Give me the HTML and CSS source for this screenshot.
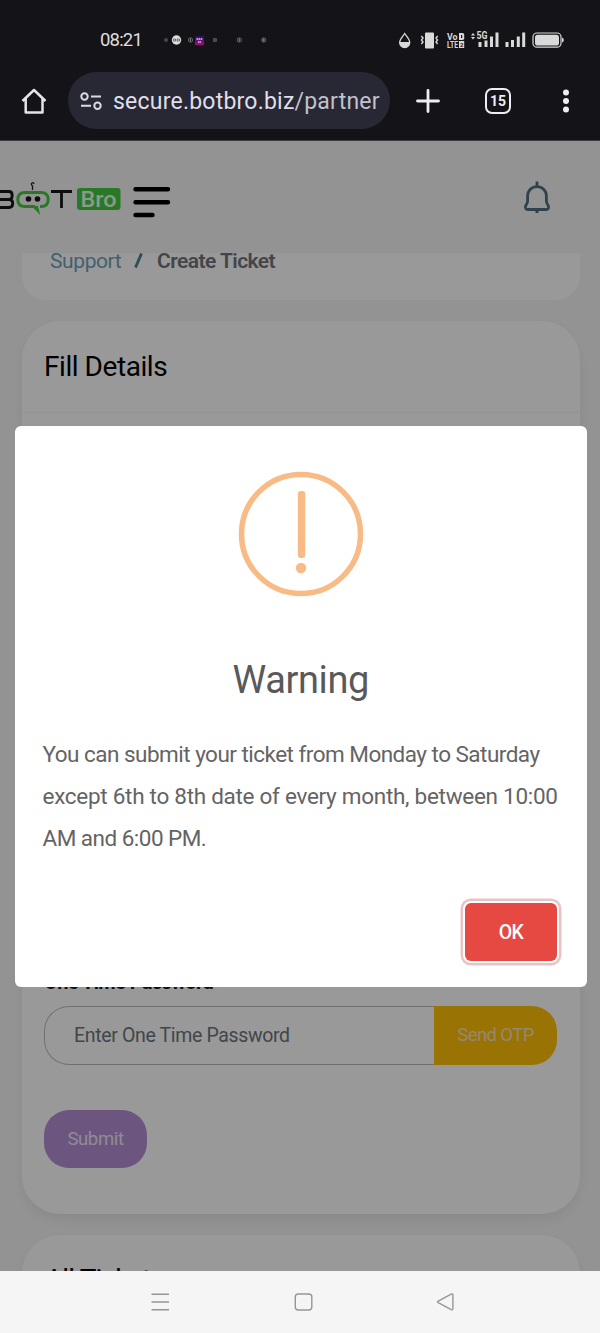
FILE: index.html
```html
<!DOCTYPE html>
<html lang="en">
<head>
<meta charset="utf-8">
<title>Create Ticket</title>
<link rel="stylesheet" href="styles.css">
</head>
<body>
<div class="phone">
  <header class="chrome">
    <div class="status">
      <span class="clock">08:21</span>
      <svg class="notes" width="106" height="14" viewBox="0 0 106 14">
        <circle cx="3" cy="7" r="2" fill="#48474b"/><circle cx="13.500" cy="7" r="4.700" fill="#dcdcdc"/><path d="M10.500 6h2v2h-2zM14 6h2.500v2H14z" fill="none" stroke="#555" stroke-width=".8"/>
        <circle cx="27.500" cy="7" r="2.200" fill="none" stroke="#77767a" stroke-width=".8"/><path d="M27.500 5.500v3" stroke="#aaa" stroke-width=".8"/>
        <defs><linearGradient id="app" x2="0" y2="1"><stop stop-color="#25106c"/><stop offset="1" stop-color="#a21172"/></linearGradient></defs>
        <path d="M32 3h9v9h-9z" fill="url(#app)"/><path d="M33.500 6h6M35 9h3" stroke="#e7c7ef" stroke-width="1.600" stroke-dasharray="1.600 .5"/>
        <circle cx="52" cy="7" r="2.300" fill="#4b4a4e"/><circle cx="76.300" cy="7" r="2.100" fill="none" stroke="#77767a" stroke-width=".8"/><path d="M76.300 5.500v3" stroke="#aaa" stroke-width=".8"/>
        <circle cx="100.700" cy="7" r="2.100" fill="#333" stroke="#77767a" stroke-width=".8"/><path d="M100.700 5.500v3" stroke="#999" stroke-width=".8"/>
      </svg>
      <svg class="system" width="168" height="24" viewBox="397 28 168 24">
        <g fill="#d9d9d9">
          <path d="M404.700 33.500c-2 3-5 5.600-5 9a5 5 0 0 0 10 0c0-3.400-3-6-5-9z" fill="none" stroke="#d9d9d9" stroke-width="1.300"/><path d="M399.500 42h10.400a5.200 5.800 0 0 1-10.400 0z"/>
          <rect x="425" y="32.500" width="9" height="16" rx="1"/><path d="M421.300 36l1.700 2-1.500 2 1.500 2-1.700 2M437.700 36l-1.700 2 1.500 2-1.500 2 1.700 2" fill="none" stroke="#d9d9d9" stroke-width="1.400"/>
          <text x="447" y="39.500" class="tiny" textLength="10.500" lengthAdjust="spacingAndGlyphs">Vo</text><text x="447" y="47.700" class="tiny" textLength="11" lengthAdjust="spacingAndGlyphs">LTE</text>
          <path d="M459 33h3.500q1.700 0 1.700 1.700v3.600q0 1.700-1.700 1.700H459z"/><path d="M461 35v3h1.200v-3z" fill="#141318"/>
          <rect x="459" y="41" width="5.200" height="7"/><text x="460" y="47" font-size="6" font-family="Roboto" font-weight="700" fill="#141318">2</text>
          <path d="M471 35.500l2-2.500 2 2.500zM471 37l2 2.500 2-2.500z"/><text x="476.500" y="39" class="five" textLength="11" lengthAdjust="spacingAndGlyphs">5G</text>
          <path d="M478.500 42h3v5h-3zM484.500 40.500h3v6.500h-3zM490 36.500h3V47h-3zM495.500 32.500h3V47h-3zM505.500 42h3v5h-3zM511 40h3v7h-3zM516.800 36.500h3V47h-3zM522.200 32.500h3V47h-3z"/>
          <rect x="533" y="33" width="28" height="14.200" rx="4" fill="none" stroke="#d9d9d9" stroke-width="1.200"/><rect x="535" y="34.700" width="24" height="10.800" rx="2.600"/><path d="M562 37.500q1.800.5 1.800 2.500t-1.800 2.500z"/>
        </g>
      </svg>
    </div>
    <div class="toolbar">
      <svg class="home" width="28" height="28" viewBox="0 0 28 28"><path d="M2.500 14L14 3l11.500 11M5.700 11.500v14h16.800v-14" fill="none" stroke="#e5e4e9" stroke-width="2.500" stroke-linejoin="round"/></svg>
      <div class="url">
        <svg width="22" height="20" viewBox="0 0 22 20"><g fill="none" stroke="#dad9e2" stroke-width="2"><circle cx="4.500" cy="5.500" r="3.200"/><path d="M11 5.500h10M1 14.800h10"/><circle cx="17.500" cy="14.800" r="3.200"/></g></svg>
        <span class="address">secure.botbro.biz<span class="path">/partner</span></span>
      </div>
      <svg class="plus" width="24" height="24" viewBox="0 0 24 24"><path d="M1.500 12h21M12 1.500v21" stroke="#eeedf2" stroke-width="2.800" stroke-linecap="round"/></svg>
      <span class="tabs">15</span>
      <svg class="dots" width="8" height="26" viewBox="0 0 8 26" fill="#eeedf2"><circle cx="4" cy="4.500" r="3"/><circle cx="4" cy="13" r="3"/><circle cx="4" cy="21.500" r="3"/></svg>
    </div>
  </header>

  <main class="page">
    <div class="topbar">
      <svg width="172" height="44" viewBox="0 178 172 44">
        <g fill="none" stroke="#161616" stroke-width="2.800"><path d="M-7 191.500H9q3.200 0 3.200 4t-3.200 4H-7M9 199.500q3.700 0 3.700 4t-3.700 4H-7M51 191.500h21M61.500 191.500V208"/></g>
        <path d="M32.500 190v-4q-2-2-.5-3t2 1" fill="none" stroke="#222" stroke-width="1.300"/>
        <path d="M29 206.500h-4q-7.200 0-7.200-7t7.200-7h16q7.200 0 7.200 7t-7.200 7h-1M27 206.500h7l3.500 3.500-1-4" fill="none" stroke="#45c93f" stroke-width="3"/>
        <circle cx="28.500" cy="199" r="2.800" fill="#161616"/><circle cx="37.500" cy="199" r="2.800" fill="#161616"/>
        <rect x="77" y="188" width="43.500" height="22" rx="3" fill="#45c93f"/>
        <text x="80.500" y="207" class="bro" textLength="36" lengthAdjust="spacingAndGlyphs">Bro</text>
        <path d="M135.500 189.300h32.500M135.500 202.200h32.500M135.500 215h17" stroke="#000" stroke-width="4.400" stroke-linecap="round"/>
      </svg>
      <svg class="bell" width="30" height="34" viewBox="0 0 30 34"><path d="M15 1.500v5M5.600 16a9.400 9.400 0 0 1 18.800 0v5q0 2 1.400 3.800c1.600 2 .8 4.700-1.300 4.700h-19c-2.100 0-2.900-2.700-1.300-4.700Q5.600 23 5.600 21zM13.500 31.600h3" fill="none" stroke="#4f6f83" stroke-width="2.800"/></svg>
    </div>
    <nav class="crumbs"><span class="link">Support</span><svg class="slash" width="9" height="15" viewBox="0 0 9 15" role="img" aria-label="/"><path d="M1.500 14.500L7.500 .5" stroke="#52809a" stroke-width="2.900"/></svg><b class="here">Create Ticket</b></nav>
    <section class="card form">
      <h2>Fill Details</h2>
      <div class="fields">
        <label>One Time Password</label>
        <div class="otp"><span class="input">Enter One Time Password</span><span class="send">Send OTP</span></div>
        <span class="submit">Submit</span>
      </div>
    </section>
    <section class="card list"><h2>All Tickets</h2></section>

    <div class="overlay">
      <div class="modal">
        <svg width="126" height="126" viewBox="0 0 126 126"><circle cx="63" cy="63" r="59.500" fill="none" stroke="#f8bb86" stroke-width="5.500"/><rect x="59.800" y="20" width="7.500" height="67" rx="3" fill="#f8bb86"/><circle cx="63" cy="97" r="5.200" fill="#f8bb86"/></svg>
        <h1>Warning</h1>
        <p><span class="l1">You can submit your ticket from Monday to Saturday</span><br><span class="l2">except 6th to 8th date of every month, between 10:00</span><br><span class="l3">AM and 6:00 PM.</span></p>
        <span class="ok">OK</span>
      </div>
    </div>
  </main>

  <footer class="sysnav">
    <svg width="300" height="22" viewBox="0 0 300 22" fill="none" stroke="#969696" stroke-width="1.400"><path d="M1.500 3.300h17.500M1.500 11h17.500M1.500 18.800h17.500"/><rect x="145.300" y="3" width="16.500" height="16" rx="3"/><path d="M288.500 10.200l13-7q1.700-.8 1.700 1v13.500q0 1.800-1.700 1l-13-7q-1.400-.8 0-1.500z" transform="translate(-.3 -.1)"/></svg>
  </footer>
</div>
</body>
</html>
```
FILE: styles.css
```css
* { box-sizing: border-box; }
body { margin: 0; font-family: Roboto, "Noto Sans", sans-serif; }
.phone { width: 600px; height: 1333px; display: flex; flex-direction: column; overflow: hidden; }
.chrome { height: 141px; flex: none; background: #141318; border-bottom: 1px solid #3c3c3e; }
.status { height: 72px; display: flex; align-items: center; padding: 8px 35px 0 100px; }
.clock { width: 43px; font-size: 18.5px; color: #dedede; letter-spacing: -.8px; white-space: nowrap; }
.notes { margin-left: 20px; }
.system { margin-left: auto; }
.tiny { font: 700 9px Roboto, sans-serif; }
.five { font: 700 10px Roboto, sans-serif; }
.toolbar { height: 57px; display: flex; align-items: center; padding-left: 20px; }
.url { margin-left: 20px; width: 322px; height: 57px; border-radius: 29px; background: #282834; display: flex; align-items: center; padding-left: 12px; gap: 11px; }
.address { font-size: 23px; color: #e0dfe9; white-space: nowrap; letter-spacing: .22px; padding-top: 2px; }
.path { color: #c2c1cd; }
.plus { margin-left: 26px; }
.tabs { margin-left: 45px; width: 26px; height: 26px; border: 2.500px solid #eeedf2; border-radius: 7px; color: #eeedf2; font-size: 14px; font-weight: 700; display: flex; align-items: center; justify-content: center; }
.dots { margin-left: 51px; }

.page { height: 1130px; flex: none; position: relative; background: #f5f5f5; overflow: hidden; }
.topbar { height: 112px; display: flex; justify-content: space-between; padding: 37px 48px 0 0; }
.bell { margin-top: 2px; }
.crumbs { margin: 0 20px 21px 22px; height: 47px; background: #fff; border-radius: 0 0 24px 24px; overflow: hidden; display: flex; align-items: flex-end; padding: 0 0 25px 28px; font-size: 21px; line-height: 28px; white-space: nowrap; }
.link { color: #6fa0ba; width: 84px; letter-spacing: -.4px; }
.slash { margin: 0 14px 7px 0; }
.here { color: #73737a; font-weight: 600; letter-spacing: -.55px; }
.card { margin: 0 20px 21px 22px; background: #fff; border-radius: 38px; box-shadow: 0 6px 12px rgba(0,0,0,.06); }
.card h2 { margin: 0; height: 92px; padding: 0 22px; font-size: 28px; line-height: 92px; font-weight: 400; color: #000; letter-spacing: -.45px; }
.form { height: 893px; }
.form h2 { border-bottom: 1px solid #f6f6f6; }
.fields { display: flex; flex-direction: column; align-items: flex-start; padding: 556px 22px 0; }
label { height: 37px; font-size: 20px; line-height: 26px; font-weight: 700; color: #1b1b22; letter-spacing: -.6px; }
.otp { width: 513px; height: 59px; display: flex; margin-bottom: 45px; }
.input { flex: 1; border: 1.500px solid #bbb; border-right: 0; border-radius: 25px 0 0 25px; padding-left: 29px; font-size: 19.500px; line-height: 58px; color: #6c757d; letter-spacing: -.35px; }
.send { width: 123px; background: #ffc107; border-radius: 0 25px 25px 0; color: #f5e3c0; font-size: 18.500px; line-height: 59px; text-align: center; letter-spacing: -.6px; }
.submit { width: 103px; height: 58px; border-radius: 25px; background: #b58fd5; color: #f0e6f7; font-size: 18.500px; line-height: 58px; text-align: center; letter-spacing: -.35px; }
.list { height: 300px; }
.card.list h2 { line-height: 90px; padding-left: 23px; letter-spacing: -.9px; }

.overlay { position: absolute; inset: 0; background: rgba(0,0,0,.4); display: flex; align-items: flex-start; padding: 285px 13px 0 14.500px; }
.modal { width: 572.500px; height: 560.500px; border-radius: 6px; background: #fff; display: flex; flex-direction: column; align-items: center; padding: 45px 28px 0; }
h1 { margin: 55px 0 0; font-size: 38px; line-height: 56px; font-weight: 400; color: #595959; letter-spacing: -.4px; }
p { margin: 25px 0 0; align-self: flex-start; font-size: 22.500px; line-height: 42px; color: #646464; white-space: nowrap; }
.l1, .l3 { letter-spacing: -.52px; }
.l2 { letter-spacing: -.28px; }
.ok { align-self: flex-end; margin: 44px 2px 0 0; width: 92px; height: 58px; border-radius: 6px; background: #e64942; box-shadow: 0 0 0 2px #fff, 0 0 0 4.500px #e9c3c4; color: #fff; font-size: 19.500px; font-weight: 500; line-height: 59px; text-align: center; letter-spacing: -.6px; }
.bro { font: 500 22px Roboto, sans-serif; fill: #e9ffe8; }
.sysnav { height: 62px; flex: none; background: #f5f5f5; padding: 20px 0 0 150px; }
.sysnav svg { display: block; overflow: visible; }
```
